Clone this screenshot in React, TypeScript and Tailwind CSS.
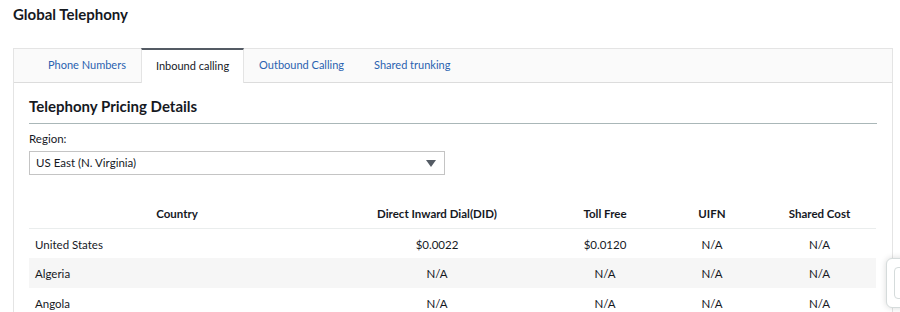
const rows = [
  { country: "United States", did: "$0.0022", toll: "$0.0120", uifn: "N/A", shared: "N/A" },
  { country: "Algeria", did: "N/A", toll: "N/A", uifn: "N/A", shared: "N/A" },
  { country: "Angola", did: "N/A", toll: "N/A", uifn: "N/A", shared: "N/A" },
];

const tabs = ["Phone Numbers", "Inbound calling", "Outbound Calling", "Shared trunking"];

export default function App() {
  return (
    <div className="relative h-[312px] w-[900px] overflow-hidden bg-white font-['Lato',sans-serif] text-[#16191f]">
      <h1 className="pl-[13px] pt-[5px] text-[15px] font-bold leading-[18px]">Global Telephony</h1>

      <div className="ml-[13px] mt-[25px] w-[880px] border border-[#e4e4e4]">
        <div className="flex h-[34px] border-b border-[#dcdcdc] bg-[#fafafa] pl-[19px]">
          {tabs.map((t, i) =>
            i === 1 ? (
              <div
                key={t}
                className="-mt-px -mb-px flex h-[35px] items-center border-x border-t-2 border-[#e4e4e4] border-t-[#545b64] bg-white px-[14px] text-[11px] text-[#16191f]"
              >
                {t}
              </div>
            ) : (
              <div key={t} className="flex items-center px-[15px] text-[11px] text-[#2a62b0]">
                {t}
              </div>
            )
          )}
        </div>

        <div className="px-[15px] pt-[14px]">
          <h2 className="border-b border-[#aab7b8] pb-[7px] text-[15px] font-bold leading-[19px]">
            Telephony Pricing Details
          </h2>
          <div className="mt-[7px] text-[11.5px] leading-[15px]">Region:</div>
          <div className="mt-[5px] flex h-[24px] w-[416px] items-center justify-between border border-[#c4c4c4] pl-[6px] pr-[8px] text-[11.5px]">
            <span>US East (N. Virginia)</span>
            <svg width="10" height="7" viewBox="0 0 10 7">
              <path d="M0 0 L10 0 L5 7 Z" fill="#545b64" />
            </svg>
          </div>

          <table className="mt-[24px] w-[847px] table-fixed border-collapse text-[11.5px]">
            <colgroup>
              <col className="w-[296px]" />
              <col className="w-[224px]" />
              <col className="w-[112px]" />
              <col className="w-[102px]" />
              <col className="w-[113px]" />
            </colgroup>
            <thead>
              <tr className="h-[29px] border-b border-[#eaeded] font-bold">
                <th className="text-center">Country</th>
                <th className="text-center">Direct Inward Dial(DID)</th>
                <th className="text-center">Toll Free</th>
                <th className="text-center">UIFN</th>
                <th className="text-center">Shared Cost</th>
              </tr>
            </thead>
            <tbody>
              {rows.map((r, i) => (
                <tr key={r.country} className={`h-[30px] ${i % 2 === 1 ? "bg-[#f6f6f6]" : ""}`}>
                  <td className="pl-[6px] pt-[2px] text-left">{r.country}</td>
                  <td className="pt-[2px] text-center">{r.did}</td>
                  <td className="pt-[2px] text-center">{r.toll}</td>
                  <td className="pt-[2px] text-center">{r.uifn}</td>
                  <td className="pt-[2px] text-center">{r.shared}</td>
                </tr>
              ))}
            </tbody>
          </table>
        </div>
      </div>

      <div className="absolute left-[886px] top-[258px] h-[50px] w-[40px] rounded-[6px] border border-[#d5dbdb] bg-white shadow-[0_0_6px_rgba(0,0,0,0.15)]">
        <div className="ml-[7px] mt-[8px] h-[32px] w-[20px] rounded-[4px] border border-[#d5dbdb]" />
      </div>
    </div>
  );
}
